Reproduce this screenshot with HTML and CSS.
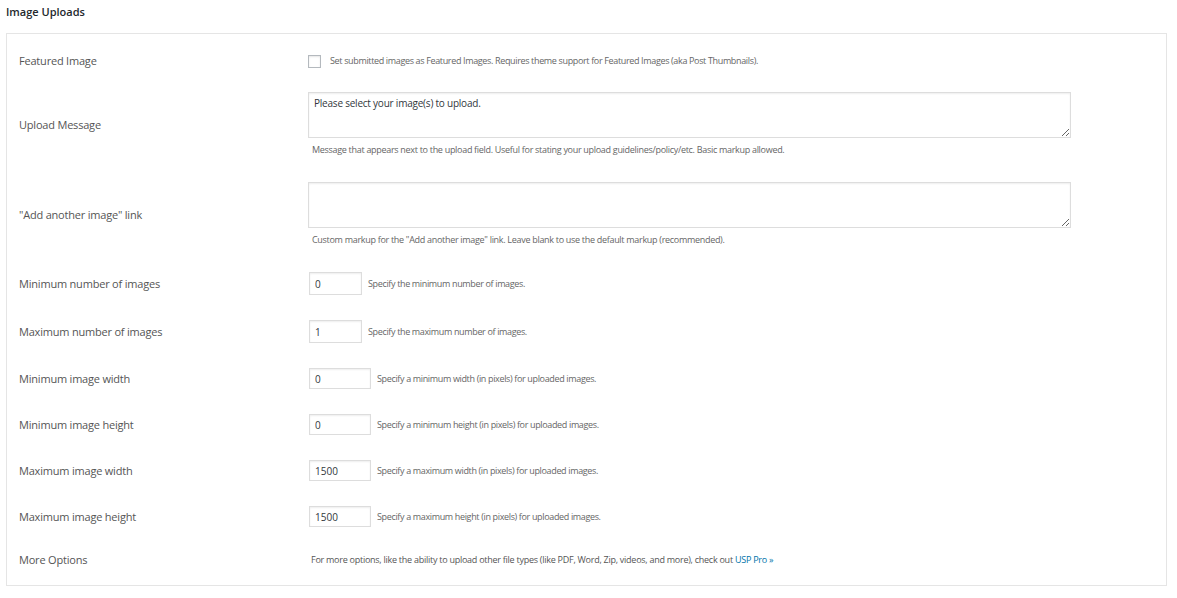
FILE: index.html
```html
<!DOCTYPE html>
<html lang="en">
<head>
<meta charset="utf-8">
<title>Image Uploads</title>
<link rel="stylesheet" href="styles.css">
</head>
<body>
<h3 class="section-title">Image Uploads</h3>
<div class="panel">
  <div class="row row-check">
    <div class="label">Featured Image</div>
    <div class="field inline">
      <span class="checkbox"></span>
      <span class="note">Set submitted images as Featured Images. Requires theme support for Featured Images (aka Post Thumbnails).</span>
    </div>
  </div>
  <div class="row row-area">
    <div class="label">Upload Message</div>
    <div class="field">
      <textarea class="area">Please select your image(s) to upload.</textarea>
      <div class="desc">Message that appears next to the upload field. Useful for stating your upload guidelines/policy/etc. Basic markup allowed.</div>
    </div>
  </div>
  <div class="row row-area">
    <div class="label">"Add another image" link</div>
    <div class="field">
      <textarea class="area"></textarea>
      <div class="desc">Custom markup for the "Add another image" link. Leave blank to use the default markup (recommended).</div>
    </div>
  </div>
  <div class="row">
    <div class="label">Minimum number of images</div>
    <div class="field inline">
      <input class="num num-count" type="text" value="0">
      <span class="note">Specify the minimum number of images.</span>
    </div>
  </div>
  <div class="row">
    <div class="label">Maximum number of images</div>
    <div class="field inline">
      <input class="num num-count" type="text" value="1">
      <span class="note">Specify the maximum number of images.</span>
    </div>
  </div>
  <div class="row">
    <div class="label">Minimum image width</div>
    <div class="field inline">
      <input class="num num-size" type="text" value="0">
      <span class="note">Specify a minimum width (in pixels) for uploaded images.</span>
    </div>
  </div>
  <div class="row">
    <div class="label">Minimum image height</div>
    <div class="field inline">
      <input class="num num-size" type="text" value="0">
      <span class="note">Specify a minimum height (in pixels) for uploaded images.</span>
    </div>
  </div>
  <div class="row">
    <div class="label">Maximum image width</div>
    <div class="field inline">
      <input class="num num-size" type="text" value="1500">
      <span class="note">Specify a maximum width (in pixels) for uploaded images.</span>
    </div>
  </div>
  <div class="row">
    <div class="label">Maximum image height</div>
    <div class="field inline">
      <input class="num num-size" type="text" value="1500">
      <span class="note">Specify a maximum height (in pixels) for uploaded images.</span>
    </div>
  </div>
  <div class="row row-last">
    <div class="label">More Options</div>
    <div class="field">
      <span class="more">For more options, like the ability to upload other file types (like PDF, Word, Zip, videos, and more), check out <a class="link" href="#">USP Pro »</a></span>
    </div>
  </div>
</div>
</body>
</html>
```
FILE: styles.css
```css
html, body {
  margin: 0;
  padding: 0;
  background: #fff;
}
body {
  font-family: "Open Sans", "Noto Sans", sans-serif;
  color: #444;
  padding: 0 10px 0 6px;
}
.section-title {
  margin: 0;
  height: 33px;
  line-height: 24px;
  font-size: 11px;
  font-weight: 600;
  color: #23282d;
}
.panel {
  border: 1px solid #e5e5e5;
  background: #fff;
  padding: 9px 12px 5px 12px;
}
.row {
  display: grid;
  grid-template-columns: 289px 1fr;
  align-items: center;
  padding: 12px 0 13px 0;
}
.row-check {
  padding: 10px 0 11px 0;
}
.row-area {
  padding: 12px 0 12px 0;
}
.row-last {
  padding: 12px 0 12px 0;
}
.label {
  font-size: 11px;
  line-height: 16px;
  letter-spacing: -0.2px;
  color: #555;
}
.field {
  display: flex;
  flex-direction: column;
  align-items: flex-start;
}
.field.inline {
  flex-direction: row;
  align-items: center;
}
.checkbox {
  display: block;
  width: 11px;
  height: 11px;
  border: 1px solid #b4b9be;
  background: #fff;
  box-shadow: inset 0 1px 2px rgba(0,0,0,.1);
  margin-right: 9px;
}
.note {
  font-size: 9px;
  line-height: 16px;
  color: #666;
  letter-spacing: -0.35px;
}
.area {
  box-sizing: border-box;
  width: 763px;
  height: 46px;
  margin: 0;
  border: 1px solid #ddd;
  box-shadow: inset 0 1px 2px rgba(0,0,0,.07);
  padding: 3px 5px;
  font-family: "Open Sans", "Noto Sans", sans-serif;
  font-size: 10px;
  line-height: 14px;
  letter-spacing: -0.22px;
  color: #32373c;
  resize: both;
  outline: none;
}
.desc {
  margin-top: 4px;
  padding-left: 4px;
  font-size: 9px;
  line-height: 16px;
  color: #666;
  letter-spacing: -0.3px;
}
.num {
  box-sizing: border-box;
  margin: 0 6px 0 1px;
  border: 1px solid #ddd;
  box-shadow: inset 0 1px 2px rgba(0,0,0,.07);
  padding: 0 5px;
  font-family: "Open Sans", "Noto Sans", sans-serif;
  font-size: 10px;
  color: #32373c;
  outline: none;
  background: #fff;
}
.num-count {
  width: 53px;
  height: 23px;
}
.num-size {
  width: 62px;
  height: 21px;
}
.more {
  padding-left: 3px;
  font-size: 9px;
  line-height: 16px;
  color: #555;
  letter-spacing: -0.26px;
}
.link {
  color: #0073aa;
  text-decoration: none;
}
```
